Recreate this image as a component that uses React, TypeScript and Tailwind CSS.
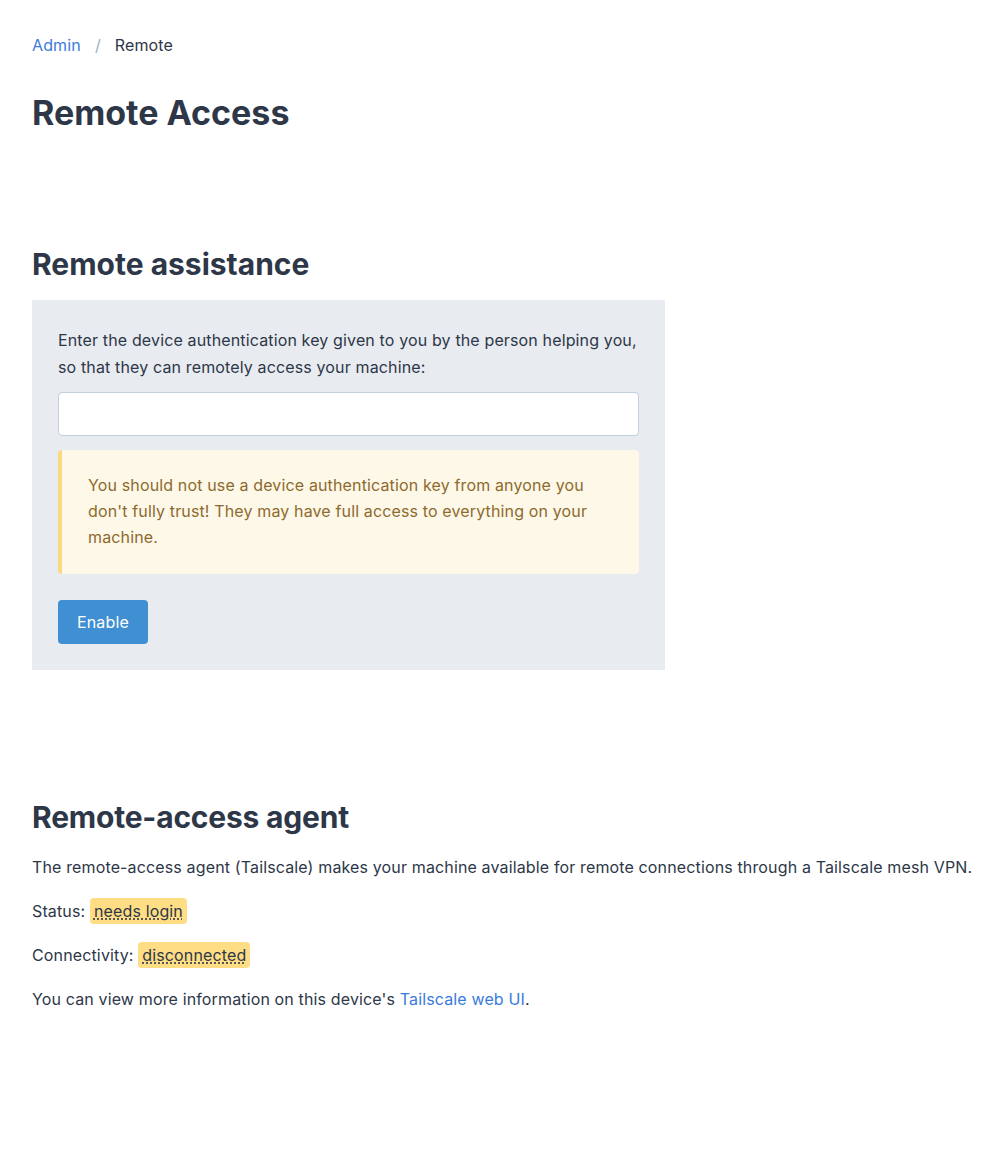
import React from "react";

function Badge({ children }: { children: React.ReactNode }) {
  return (
    <abbr className="rounded bg-[#fedd84] px-1 py-[3px] no-underline">
      <span className="underline decoration-dotted decoration-[#2d3748] underline-offset-2">{children}</span>
    </abbr>
  );
}

export default function App() {
  return (
    <div
      className="min-h-[1158px] bg-white pl-8 pr-4 pt-[34px] text-[16px] tracking-[0.14px] text-[#2d3748]"
      style={{ fontFamily: "Inter, 'Noto Sans', sans-serif" }}
    >
      {/* Breadcrumb */}
      <nav className="flex items-center leading-[22px]">
        <a href="#" className="text-[#3a7bdc]">Admin</a>
        <span className="mx-[14px] text-[#a0aec0]">/</span>
        <span>Remote</span>
      </nav>

      <h1 className="mt-[36px] text-[34px] font-bold leading-[42px] tracking-[0px]">Remote Access</h1>

      {/* Remote assistance */}
      <section className="mt-[111px]">
        <h2 className="text-[30px] font-bold leading-[38px] tracking-[0px]">Remote assistance</h2>
        <div className="mt-[17px] w-[633px] bg-[#e8ebf0] px-[26px] pb-[26px] pt-[27px]">
          <p className="leading-[27px]">
            Enter the device authentication key given to you by the person helping you, so that they can remotely access your machine:
          </p>
          <input
            type="text"
            className="mt-[11px] block h-[44px] w-full rounded border border-[#c3cede] bg-white px-3 outline-none"
          />
          <div className="mt-[14px] rounded border-l-4 border-[#fbd982] bg-[#fef8e8] pb-[24px] pl-[26px] pr-[30px] pt-[22px] leading-[26px] text-[#8d6a2e]">
            You should not use a device authentication key from anyone you don't fully trust! They may have full access to everything on your machine.
          </div>
          <button className="mt-[26px] h-[44px] rounded bg-[#3f8fd2] px-[19px] text-white">Enable</button>
        </div>
      </section>

      {/* Remote-access agent */}
      <section className="mt-[128px]">
        <h2 className="text-[30px] font-bold leading-[38px] tracking-[-0.2px]">Remote-access agent</h2>
        <p className="mt-[19px] leading-[24px]">
          The remote-access agent (Tailscale) makes your machine available for remote connections through a Tailscale mesh VPN.
        </p>
        <p className="mt-[20px] leading-[24px]">
          Status: <Badge>needs login</Badge>
        </p>
        <p className="mt-[20px] leading-[24px]">
          Connectivity: <Badge>disconnected</Badge>
        </p>
        <p className="mt-[20px] leading-[24px]">
          You can view more information on this device's{" "}
          <a href="#" className="text-[#3a7bdc]">Tailscale web UI</a>.
        </p>
      </section>
    </div>
  );
}
